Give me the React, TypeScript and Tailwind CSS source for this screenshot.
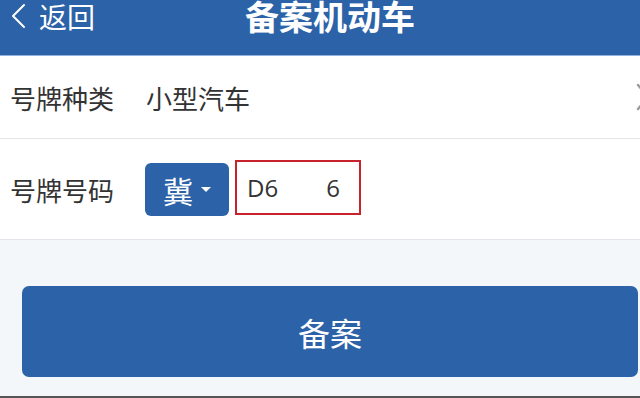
const font = { fontFamily: '"Noto Sans CJK SC", "Noto Sans", sans-serif' };

const App = () => {
  return (
    <div className="w-[640px] h-[398px] overflow-hidden bg-[#f4f7fa]" style={font}>
      <div className="w-[660px] h-[398px] flex flex-col">
        {/* header */}
        <div className="relative h-[56px] bg-[#2c62a7] border-b border-[#8fb4e0] flex items-start justify-center">
          <div className="absolute left-[10px] top-0 flex items-center text-white">
            <svg width="16" height="26" viewBox="0 0 16 26" fill="none" stroke="currentColor" strokeWidth="2" strokeLinecap="round" strokeLinejoin="round">
              <path d="M14 2 L3 13 L14 24" />
            </svg>
            <span className="ml-[13px] text-[28px] leading-[32px]">返回</span>
          </div>
          <h1 className="text-[34px] leading-[32px] font-bold text-white">备案机动车</h1>
        </div>

        {/* form */}
        <div className="bg-white">
          <div className="h-[83px] flex items-center pl-[10px] border-b border-[#e6e6e6]">
            <span className="text-[26px] text-[#333]">号牌种类</span>
            <span className="ml-[32px] text-[26px] text-[#333]">小型汽车</span>
            <svg className="ml-auto mr-[10px]" width="14" height="28" viewBox="0 0 14 28" fill="none" stroke="#9a9a9a" strokeWidth="2.4" strokeLinecap="round" strokeLinejoin="round">
              <path d="M2 2 L12 14 L2 26" />
            </svg>
          </div>
          <div className="h-[101px] flex items-center pl-[10px] border-b border-[#e2e6ea]">
            <span className="text-[26px] text-[#333]">号牌号码</span>
            <button className="ml-[31px] mt-[1px] w-[84px] h-[53px] rounded-[6px] bg-[#2c62a7] flex items-center justify-center gap-[8px] text-white">
              <span className="text-[30px] leading-none">冀</span>
              <span className="w-0 h-0 border-l-[5px] border-r-[5px] border-t-[5px] border-l-transparent border-r-transparent border-t-white" />
            </button>
            <div className="ml-[6px] mt-[-3px] w-[126px] h-[55px] border-2 border-[#c8232c] flex items-center pl-[10px] text-[24px] text-[#333]" style={{ fontFamily: '"Open Sans", "Noto Sans", sans-serif' }}>
              <span>D6</span>
              <span className="ml-[48px]">6</span>
            </div>
          </div>
        </div>

        {/* submit */}
        <div className="flex-1 px-[22px] pt-[46px]">
          <button className="w-full h-[91px] rounded-[7px] bg-[#2c62a7] text-white text-[32px]">备案</button>
        </div>
        <div className="h-[2px] bg-[#555]" />
      </div>
    </div>
  );
};

export default App;
